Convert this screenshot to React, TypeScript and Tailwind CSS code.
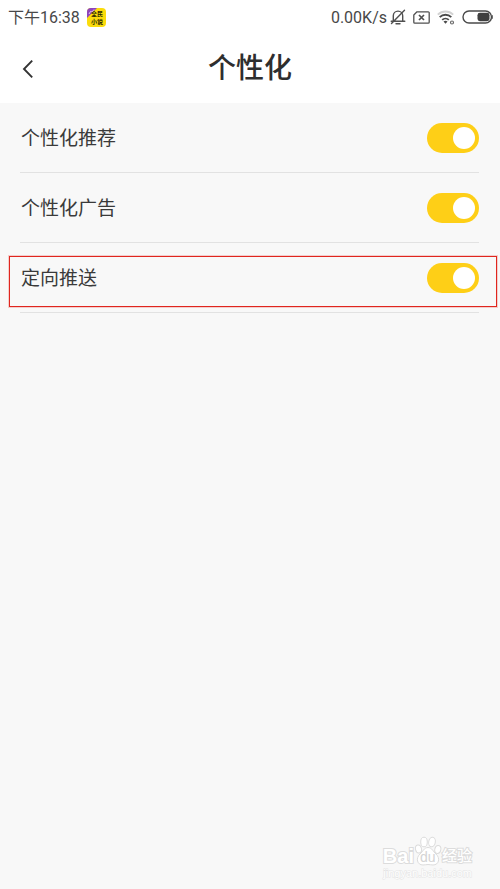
import { useState } from "react";

type SettingRowProps = {
  id: string;
  label: string;
  isHighlighted?: boolean;
};

const settings: SettingRowProps[] = [
  { id: "recommend", label: "个性化推荐" },
  { id: "ads", label: "个性化广告" },
  { id: "push", label: "定向推送", isHighlighted: true },
];

const BellOffIcon = () => (
  <svg width="16" height="16" viewBox="0 0 16 16" fill="none" stroke="#505050" strokeWidth="1.4">
    <path d="M3.3 12V6.8a4.7 4.7 0 0 1 9.4 0V12" />
    <path d="M1.2 12.3h13.6M6 14.7h4M14.5 1.2 1.5 14.5" strokeLinecap="round" />
  </svg>
);

const SimOffIcon = () => (
  <svg width="17" height="13" viewBox="0 0 17 13" fill="none" stroke="#505050" strokeWidth="1.3">
    <path d="M4 .8h11.2a1 1 0 0 1 1 1v9.4a1 1 0 0 1-1 1H1.8a1 1 0 0 1-1-1V4z" strokeLinejoin="round" />
    <path d="m6 4 5 5m0-5L6 9" strokeWidth="1.7" />
  </svg>
);

const WifiIcon = () => (
  <svg width="18" height="15" viewBox="0 0 18 15" fill="none" strokeWidth="1.9">
    <path d="M.8 4.6a11 11 0 0 1 15.4 0" stroke="#d2d2d2" />
    <path d="M2.7 7.2a8.2 8.2 0 0 1 11.6 0" stroke="#4a4a4a" />
    <path d="M5.2 9.9a4.8 4.8 0 0 1 6.6 0" stroke="#4a4a4a" />
    <path d="m6.5 11.6 2 2.2 2-2.2a2.9 2.9 0 0 0-4 0z" fill="#4a4a4a" />
    <circle cx="15" cy="12.5" r="1.5" stroke="#6a6a6a" strokeWidth="1.2" />
  </svg>
);

const BatteryIcon = () => (
  <svg width="31" height="14" viewBox="0 0 31 14" fill="none">
    <rect x="1" y="1" width="28.5" height="12" rx="6" stroke="#4a4a4a" strokeWidth="1.4" />
    <rect x="15.5" y="2.8" width="12" height="8.4" rx="2.4" fill="#3f3f3f" />
    <path d="M30.3 5.2v3.6" stroke="#4a4a4a" strokeWidth="1" />
  </svg>
);

const BackIcon = () => (
  <svg width="12" height="20" viewBox="0 0 12 20" fill="none" stroke="#333" strokeWidth="1.9">
    <path d="M10.2 1.6 2 10l8.2 8.4" />
  </svg>
);

const AppBadge = () => (
  <svg width="19" height="19" viewBox="0 0 19 19" className="ml-[7px]">
    <rect width="19" height="19" rx="4" fill="#fbdc0c" />
    <path d="M4 0h6L0 10V4a4 4 0 0 1 4-4z" fill="#8e44bd" />
    <path d="m2 6 1.5-2.5L5 4l2-2.5" stroke="#e3c5f0" fill="none" />
    <text fill="#2c2700" fontSize="6" fontWeight="700" fontFamily="'Noto Sans CJK SC', sans-serif">
      <tspan x="4" y="8">
        全民
      </tspan>
      <tspan x="4" y="16">
        小说
      </tspan>
    </text>
  </svg>
);

const PawIcon = () => (
  <svg width="28" height="30" viewBox="0 0 28 30" fill="#fff" stroke="#dcdcdc">
    <ellipse cx="4.5" cy="13" rx="3" ry="4" transform="rotate(-12 4.5 13)" />
    <ellipse cx="10" cy="6" rx="3.3" ry="4.8" />
    <ellipse cx="18" cy="6" rx="3.3" ry="4.8" transform="rotate(10 18 6)" />
    <ellipse cx="23.8" cy="13.5" rx="3" ry="4" transform="rotate(12 23.8 13.5)" />
    <path d="M14 11.5c4 0 5 4 8 6.5 4.5 4 3 11-3 11-2 0-3-.5-5-.5s-3 .5-5 .5c-6 0-7.500-7-3-11 3-2.500 4-6.500 8-6.500z" />
    <text x="6" y="26" fontSize="14" fontFamily="'Liberation Sans', sans-serif" fill="#d4d4d4" stroke="none">
      du
    </text>
  </svg>
);

const StatusBar = () => (
  <div className="flex h-[34px] items-center justify-between bg-white pr-[7px] pl-2 text-base text-[#484848]">
    <div className="flex items-center">
      <span className="pt-px">下午16:38</span>
      <AppBadge />
    </div>
    <div className="flex items-center gap-[7px]">
      <div className="flex items-center gap-[3px]">
        <span className="pt-px">0.00K/s</span>
        <BellOffIcon />
      </div>
      <SimOffIcon />
      <WifiIcon />
      <BatteryIcon />
    </div>
  </div>
);

const Header = () => (
  <header className="grid h-[69px] grid-cols-[1fr_auto_1fr] items-center bg-white px-5">
    <button type="button" aria-label="返回" className="justify-self-start px-[2px] py-2">
      <BackIcon />
    </button>
    <h1 className="pt-px text-[28px] leading-9 font-medium text-[#2e2e2e]">个性化</h1>
  </header>
);

const SettingRow = ({ id, label, isHighlighted = false }: SettingRowProps) => {
  const [isOn, setIsOn] = useState(true);

  return (
    <li className="relative flex h-[70px] items-center justify-between border-b border-[#e2e2e2] pl-px">
      <label htmlFor={id} className="pt-[2px] text-[19px] leading-7 text-[#3a3a3a]">
        {label}
      </label>
      <input
        id={id}
        type="checkbox"
        role="switch"
        checked={isOn}
        onChange={() => setIsOn(!isOn)}
        className="flex h-[30px] w-[52px] cursor-pointer appearance-none items-center rounded-full bg-gray-300 px-1 before:size-[22px] before:rounded-full before:bg-white checked:justify-end checked:bg-[#fecf17]"
      />
      {isHighlighted && (
        <div className="pointer-events-none absolute top-[13px] -right-[18px] -left-[11px] h-[51px] border border-[#e0261e] outline outline-[#e0261e]/20" />
      )}
    </li>
  );
};

const Watermark = () => (
  <div className="flex flex-col items-end pr-7 pb-[9px] text-white">
    <div className="flex items-end">
      <span className="font-['Liberation_Sans',sans-serif] text-[20px] leading-5 font-bold [paint-order:stroke] [-webkit-text-stroke:2px_#dcdcdc]">
        Bai
      </span>
      <PawIcon />
      <span className="text-[15px] leading-5 font-medium [paint-order:stroke] [-webkit-text-stroke:2px_#dcdcdc]">
        经验
      </span>
    </div>
    <span className="font-['Liberation_Sans',sans-serif] text-[11px] leading-[14px] [paint-order:stroke] [-webkit-text-stroke:1px_#e4e4e4]">
      jingyan.baidu.com
    </span>
  </div>
);

const App = () => (
  <div className="flex min-h-screen flex-col bg-[#f8f8f8] font-[Roboto,'Noto_Sans_CJK_SC',sans-serif]">
    <StatusBar />
    <Header />
    <main className="flex-1">
      <ul className="pr-[21px] pl-5">
        {settings.map((setting) => (
          <SettingRow key={setting.id} {...setting} />
        ))}
      </ul>
    </main>
    <Watermark />
  </div>
);

export default App;
